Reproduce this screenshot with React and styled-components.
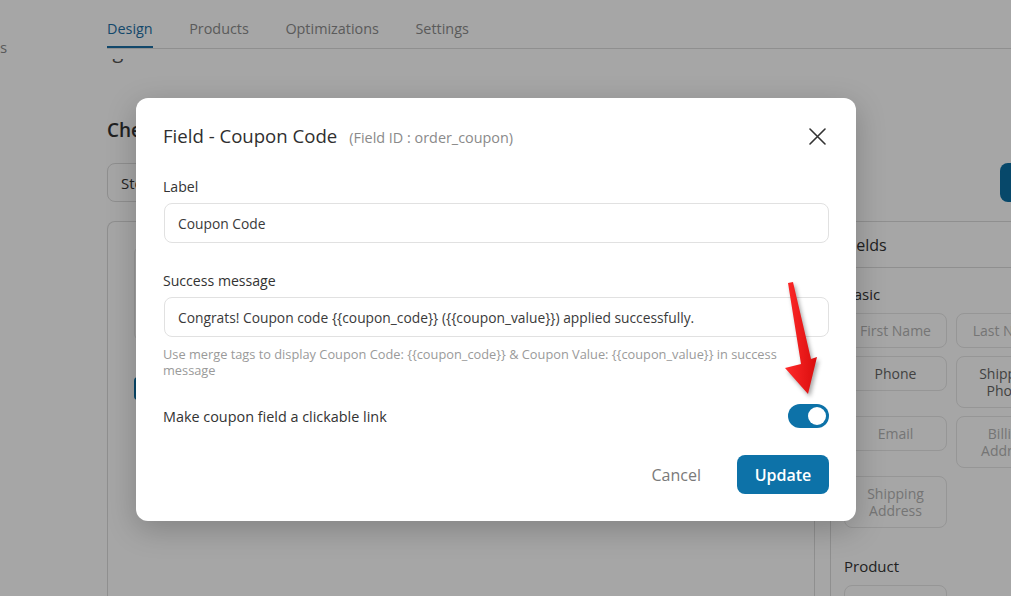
import React from "react";
import styled, { createGlobalStyle } from "styled-components";

const GlobalStyle = createGlobalStyle`
  * { box-sizing: border-box; }
  html, body { margin: 0; padding: 0; }
  body {
    font-family: "Open Sans", "Noto Sans", sans-serif;
    background: #fff;
  }
`;

const Page = styled.div`
  position: relative;
  width: 1011px;
  height: 596px;
  overflow: hidden;
  background: #fff;
  display: flex;
  align-items: flex-start;
`;

const Sidebar = styled.aside`
  flex: none;
  width: 107px;
  padding-top: 37px;
`;

const SideItem = styled.div`
  font-size: 15px;
  line-height: 20px;
  color: #8a8a8a;
`;

const Main = styled.main`
  flex: none;
  width: 993px;
  display: flex;
  flex-direction: column;

  & > * {
    flex-shrink: 0;
  }
`;

const Tabs = styled.nav`
  display: flex;
  gap: 36.5px;
  height: 49px;
  border-bottom: 1px solid #dcdcdc;
`;

const Tab = styled.div`
  display: flex;
  align-items: center;
  padding-top: 10px;
  font-size: 14.4px;
  color: ${(p) => (p.$active ? "#1d6fa5" : "#8c8c8c")};
  border-bottom: 2px solid ${(p) => (p.$active ? "#1d6fa5" : "transparent")};
`;

const ScrolledHeading = styled.div`
  margin-top: 10px;
  height: 6px;
  overflow: hidden;
  display: flex;
  align-items: flex-end;
  font-size: 20px;
  line-height: 28px;
  color: #555;
`;

const PageTitle = styled.h1`
  margin: 53px 0 0;
  font-size: 19px;
  line-height: 24px;
  font-weight: 600;
  color: #333;
`;

const Toolbar = styled.div`
  margin-top: 21px;
  display: flex;
  justify-content: space-between;
  height: 39px;
`;

const SelectBox = styled.div`
  width: 200px;
  border: 1px solid #dcdcdc;
  border-radius: 8px;
  display: flex;
  align-items: center;
  padding: 0 13px;
  font-size: 15px;
  color: #333;
`;

const PrimaryBlock = styled.div`
  width: 100px;
  border-radius: 8px;
  background: #0b6fa4;
`;

const Panels = styled.div`
  margin-top: 19px;
  display: flex;
  gap: 15px;
  height: 420px;
`;

const LeftPanel = styled.section`
  width: 708px;
  border: 1px solid #dcdcdc;
  border-bottom: none;
  border-radius: 8px 8px 0 0;
  padding: 25px 26px;
  display: flex;
  flex-direction: column;
  gap: 37px;
`;

const InnerCard = styled.div`
  height: 93px;
  border: 1px solid #e8e8e8;
  border-radius: 6px;
`;

const SmallBlue = styled.div`
  width: 120px;
  height: 23px;
  border-radius: 4px;
  background: #0b6fa4;
`;

const RightPanel = styled.aside`
  flex: 1;
  border-top: 1px solid #dcdcdc;
  border-left: 1px solid #dcdcdc;
`;

const PanelHeader = styled.div`
  height: 46px;
  border-bottom: 1px solid #dcdcdc;
  display: flex;
  align-items: center;
  padding-left: 13px;
  font-size: 16px;
  color: #333;
`;

const Section = styled.div`
  padding: 16px 13px 0;
`;

const SectionLabel = styled.div`
  font-size: 15px;
  line-height: 20px;
  color: #333;
  margin-top: ${(p) => p.$mt || 0}px;
`;

const FieldGrid = styled.div`
  margin-top: 9px;
  display: grid;
  grid-template-columns: 103px 103px;
  gap: 8px 9px;
  align-items: start;
`;

const FieldButton = styled.div`
  border: 1px solid #e6e6e6;
  border-radius: 8px;
  padding: 8px 6px;
  text-align: center;
  font-size: 14px;
  line-height: 17px;
  color: ${(p) => (p.$on ? "#666" : "#b4b4b4")};
  min-height: 35px;
`;

const Overlay = styled.div`
  position: absolute;
  inset: 0;
  background: rgba(0, 0, 0, 0.35);
`;

const Modal = styled.div`
  position: absolute;
  left: 136px;
  top: 98px;
  width: 720px;
  background: #fff;
  border-radius: 12px;
  box-shadow: 0 8px 30px rgba(0, 0, 0, 0.22);
  padding: 26px 27px 27px;
  display: flex;
  flex-direction: column;
`;

const ModalHeader = styled.div`
  display: flex;
  align-items: center;
  justify-content: space-between;
  height: 24px;
`;

const TitleGroup = styled.div`
  display: flex;
  align-items: baseline;
  gap: 12px;
`;

const Title = styled.h2`
  margin: 0;
  font-size: 18.6px;
  line-height: 24px;
  font-weight: 500;
  color: #2f2f2f;
`;

const FieldId = styled.span`
  font-size: 14.4px;
  color: #8a8a8a;
`;

const CloseButton = styled.button`
  border: none;
  background: none;
  padding: 0;
  width: 18px;
  height: 18px;
  margin-right: 3px;
  display: flex;
  align-items: center;
  justify-content: center;
  cursor: pointer;
`;

const FormGroup = styled.div`
  margin-top: ${(p) => p.$mt}px;
  display: flex;
  flex-direction: column;
`;

const Label = styled.label`
  font-size: 14.1px;
  line-height: 20px;
  color: #333;
  margin-bottom: 6px;
`;

const TextInput = styled.div`
  height: 40px;
  margin-left: 1px;
  border: 1px solid #e1e1e1;
  border-radius: 8px;
  display: flex;
  align-items: center;
  padding: 0 13px;
  font-size: 13.8px;
  color: #3a3a3a;
  white-space: nowrap;
`;

const Help = styled.p`
  margin: 9px 0 0;
  font-size: 12.8px;
  line-height: 16px;
  color: #9a9a9a;
  max-width: 625px;
`;

const ToggleRow = styled.div`
  margin-top: 26px;
  display: flex;
  align-items: center;
  justify-content: space-between;
  height: 24px;
`;

const ToggleLabel = styled.span`
  font-size: 14.4px;
  color: #333;
`;

const Toggle = styled.div`
  width: 41px;
  height: 24px;
  border-radius: 12px;
  background: #0d72a8;
  display: flex;
  align-items: center;
  justify-content: ${(p) => (p.$on ? "flex-end" : "flex-start")};
  padding: 0 3px;
`;

const Knob = styled.div`
  width: 18px;
  height: 18px;
  border-radius: 50%;
  background: #fff;
`;

const Footer = styled.div`
  margin-top: 27px;
  display: flex;
  justify-content: flex-end;
  align-items: center;
  gap: 18px;
`;

const GhostButton = styled.button`
  border: none;
  background: none;
  font-family: inherit;
  font-size: 16px;
  font-weight: 500;
  color: #7a7a7a;
  padding: 0 18px;
  height: 39px;
`;

const UpdateButton = styled.button`
  border: none;
  font-family: inherit;
  height: 39px;
  width: 92px;
  border-radius: 8px;
  background: #0d72a8;
  color: #fff;
  font-size: 16px;
  font-weight: 600;
`;

const ArrowSvg = styled.svg`
  position: absolute;
  left: 780px;
  top: 278px;
  overflow: visible;
  filter: drop-shadow(2px 3px 2px rgba(0, 0, 0, 0.35));
`;

export default function App() {
  return (
    <>
      <GlobalStyle />
      <Page>
        <Sidebar>
          <SideItem>s</SideItem>
        </Sidebar>
        <Main>
          <Tabs>
            <Tab $active>Design</Tab>
            <Tab>Products</Tab>
            <Tab>Optimizations</Tab>
            <Tab>Settings</Tab>
          </Tabs>
          <ScrolledHeading>Ig</ScrolledHeading>
          <PageTitle>Checkout</PageTitle>
          <Toolbar>
            <SelectBox>Store Checkout</SelectBox>
            <PrimaryBlock />
          </Toolbar>
          <Panels>
            <LeftPanel>
              <InnerCard />
              <SmallBlue />
            </LeftPanel>
            <RightPanel>
              <PanelHeader>Fields</PanelHeader>
              <Section>
                <SectionLabel>Basic</SectionLabel>
                <FieldGrid>
                  <FieldButton>First Name</FieldButton>
                  <FieldButton>Last Name</FieldButton>
                  <FieldButton $on>Phone</FieldButton>
                  <FieldButton $on>Shipping Phone</FieldButton>
                  <FieldButton>Email</FieldButton>
                  <FieldButton>Billing Address</FieldButton>
                  <FieldButton>Shipping Address</FieldButton>
                </FieldGrid>
                <SectionLabel $mt={28}>Product</SectionLabel>
                <FieldGrid>
                  <FieldButton>Order Summary</FieldButton>
                </FieldGrid>
              </Section>
            </RightPanel>
          </Panels>
        </Main>

        <Overlay />

        <Modal>
          <ModalHeader>
            <TitleGroup>
              <Title>Field - Coupon Code</Title>
              <FieldId>(Field ID : order_coupon)</FieldId>
            </TitleGroup>
            <CloseButton aria-label="Close">
              <svg width="17" height="17" viewBox="0 0 17 17">
                <path d="M1 1 L16 16 M16 1 L1 16" stroke="#333" strokeWidth="1.6" strokeLinecap="round" />
              </svg>
            </CloseButton>
          </ModalHeader>

          <FormGroup $mt={29}>
            <Label>Label</Label>
            <TextInput>Coupon Code</TextInput>
          </FormGroup>

          <FormGroup $mt={28}>
            <Label>Success message</Label>
            <TextInput>
              Congrats! Coupon code {"{{coupon_code}}"} ({"{{coupon_value}}"}) applied successfully.
            </TextInput>
            <Help>
              Use merge tags to display Coupon Code: {"{{coupon_code}}"} &amp; Coupon Value:{" "}
              {"{{coupon_value}}"} in success message
            </Help>
          </FormGroup>

          <ToggleRow>
            <ToggleLabel>Make coupon field a clickable link</ToggleLabel>
            <Toggle $on>
              <Knob />
            </Toggle>
          </ToggleRow>

          <Footer>
            <GhostButton>Cancel</GhostButton>
            <UpdateButton>Update</UpdateButton>
          </Footer>
        </Modal>

        <ArrowSvg width="42" height="122" viewBox="0 0 42 122">
          <defs>
            <linearGradient id="arrowFill" x1="0" y1="0" x2="1" y2="0">
              <stop offset="0" stopColor="#ff2a2a" />
              <stop offset="1" stopColor="#d90d0d" />
            </linearGradient>
          </defs>
          <polygon
            points="8,5 13,4 31,81 37,79 28,116 5,90 21,86"
            fill="url(#arrowFill)"
          />
        </ArrowSvg>
      </Page>
    </>
  );
}
